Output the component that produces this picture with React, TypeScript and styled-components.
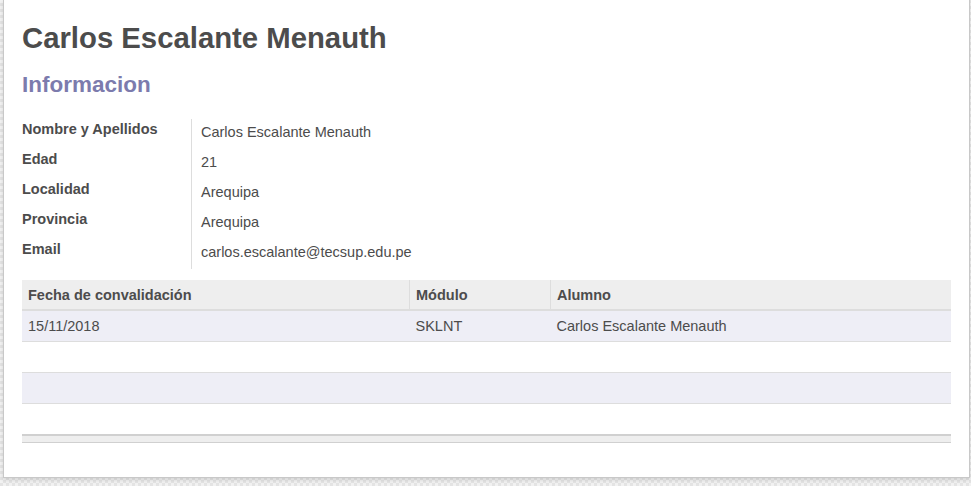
import React from "react";
import styled, { createGlobalStyle } from "styled-components";

const GlobalStyle = createGlobalStyle`
  html, body {
    margin: 0;
    padding: 0;
  }
  body {
    font-family: "Liberation Sans", Arial, sans-serif;
    color: #4c4c4c;
    background-color: #eeeeee;
    background-image:
      repeating-conic-gradient(#e4e4e4 0% 25%, #f2f2f2 0% 50%);
    background-size: 6px 6px;
    min-height: 486px;
  }
`;

const Page = styled.div`
  display: flex;
  flex-direction: column;
  padding: 0 1px 8px 3px;
`;

const Sheet = styled.div`
  background: #ffffff;
  border: 1px solid #c8c8c8;
  border-top: none;
  box-shadow: 0 2px 4px rgba(0, 0, 0, 0.12);
  padding: 21px 18px 34px 18px;
  display: flex;
  flex-direction: column;
`;

const Title = styled.h1`
  margin: 0;
  font-size: 29.3px;
  font-weight: bold;
  line-height: 33px;
  color: #4c4c4c;
`;

const Section = styled.h2`
  margin: 18px 0 0 0;
  font-size: 22.5px;
  font-weight: bold;
  line-height: 26px;
  color: #7c7bad;
`;

const Group = styled.div`
  margin-top: 21px;
  display: grid;
  grid-template-columns: 170px 1fr;
`;

const LabelCol = styled.div`
  display: flex;
  flex-direction: column;
  border-right: 1px solid #dddddd;
`;

const ValueCol = styled.div`
  display: flex;
  flex-direction: column;
  padding-left: 9px;
`;

const Label = styled.div`
  height: 30px;
  font-size: 14.5px;
  font-weight: bold;
  line-height: 20px;
  color: #4c4c4c;
`;

const Value = styled.div`
  height: 30px;
  box-sizing: border-box;
  padding-top: 2.5px;
  font-size: 14.5px;
  line-height: 20px;
  color: #4c4c4c;
`;

const Table = styled.table`
  margin-top: 11px;
  width: 100%;
  border-collapse: collapse;
  font-size: 14.5px;
  color: #4c4c4c;
  table-layout: fixed;
`;

const HeadCell = styled.th<{ $w?: number; $last?: boolean }>`
  width: ${(p) => (p.$w ? `${p.$w}px` : "auto")};
  height: 29px;
  padding: 0 6px;
  background: #eeeeee;
  border-bottom: 2px solid #dddddd;
  border-right: ${(p) => (p.$last ? "none" : "1px solid #dddddd")};
  font-weight: bold;
  text-align: left;
  vertical-align: middle;
  box-sizing: content-box;
`;

const Row = styled.tr<{ $odd?: boolean }>`
  background: ${(p) => (p.$odd ? "#eeeef6" : "#ffffff")};
  border-bottom: 1px solid #dddddd;
`;

const Cell = styled.td`
  height: 30px;
  padding: 0 6px;
  vertical-align: middle;
  white-space: nowrap;
`;

const FootRow = styled.tr`
  background: #eeeeee;
  border-top: 2px solid #d0d0d0;
  border-bottom: 1px solid #d0d0d0;
`;

const FootCell = styled.td`
  height: 6px;
  padding: 0;
`;

const fields: [string, string][] = [
  ["Nombre y Apellidos", "Carlos Escalante Menauth"],
  ["Edad", "21"],
  ["Localidad", "Arequipa"],
  ["Provincia", "Arequipa"],
  ["Email", "carlos.escalante@tecsup.edu.pe"],
];

const rows: [string, string, string][] = [
  ["15/11/2018", "SKLNT", "Carlos Escalante Menauth"],
  ["", "", ""],
  ["", "", ""],
  ["", "", ""],
];

export default function App() {
  return (
    <>
      <GlobalStyle />
      <Page>
        <Sheet>
          <Title>Carlos Escalante Menauth</Title>
          <Section>Informacion</Section>
          <Group>
            <LabelCol>
              {fields.map(([l]) => (
                <Label key={l}>{l}</Label>
              ))}
            </LabelCol>
            <ValueCol>
              {fields.map(([l, v]) => (
                <Value key={l}>{v}</Value>
              ))}
            </ValueCol>
          </Group>
          <Table>
            <thead>
              <tr>
                <HeadCell $w={375}>Fecha de convalidación</HeadCell>
                <HeadCell $w={128}>Módulo</HeadCell>
                <HeadCell $last>Alumno</HeadCell>
              </tr>
            </thead>
            <tbody>
              {rows.map((r, i) => (
                <Row key={i} $odd={i % 2 === 0}>
                  <Cell>{r[0]}</Cell>
                  <Cell>{r[1]}</Cell>
                  <Cell>{r[2]}</Cell>
                </Row>
              ))}
            </tbody>
            <tfoot>
              <FootRow>
                <FootCell colSpan={3} />
              </FootRow>
            </tfoot>
          </Table>
        </Sheet>
      </Page>
    </>
  );
}
